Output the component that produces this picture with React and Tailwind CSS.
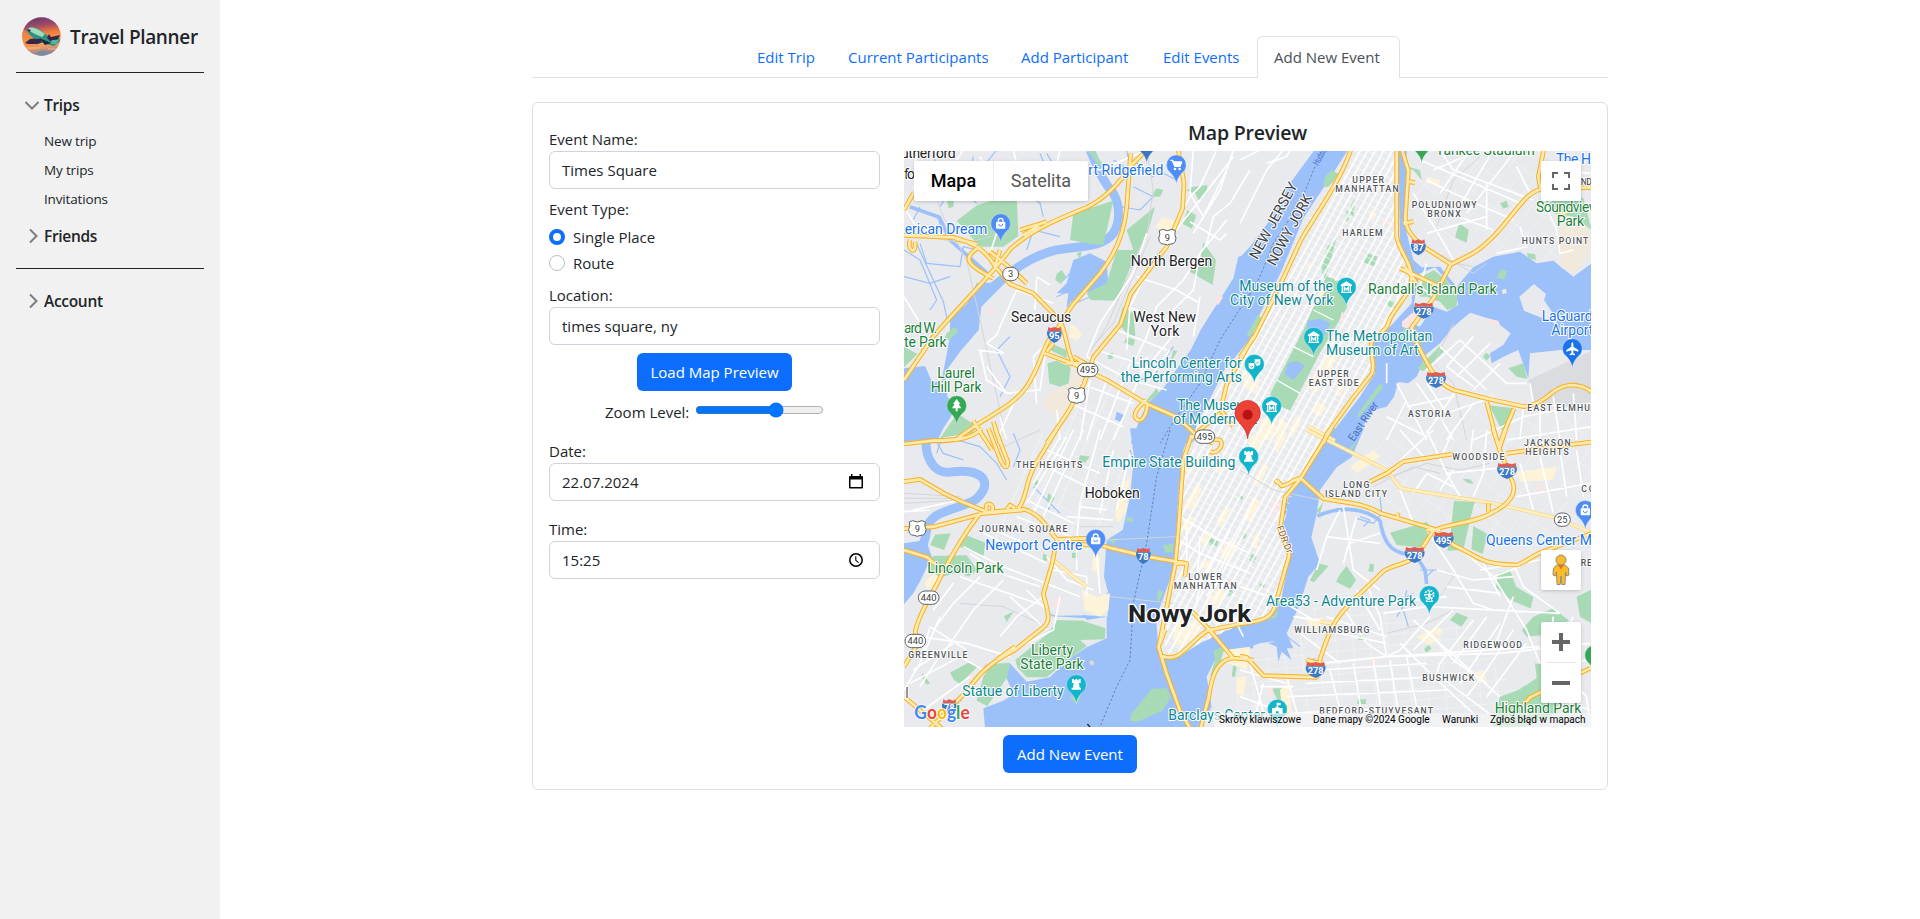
import React from "react";

const NE = [1020, 0];
const SW = [0, 840];
const SE = [1020, 840];

/* Draws one path per map sheet: north-west, north-east, south-west, south-east */
function Sheets({ d, ...rest }) {
  const offs = [[0, 0], NE, SW, SE];
  return (
    <g {...rest}>
      {d.map((p, i) => (
        <path key={i} d={p} transform={`translate(${offs[i][0]} ${offs[i][1]})`} />
      ))}
    </g>
  );
}

const water = [
  "M230 400L318 396L244 470L236 540L180 605L136 665L142 740L172 770L130 835L108 880H10V655L75 648L98 700L125 690L150 560V505L200 462Z M1060 310L1015 320L1000 385L965 440L930 495L902 540L872 600L832 655L792 712L742 762L722 802L692 880H880L890 820L932 742L972 662L1060 555Z M520 330L570 310L620 335L625 400L600 440L560 425L530 440L500 470L505 430L470 430L500 400Z M650 785L672 795L660 815L645 808Z",
  "M225 -2H325L270 84L190 205L125 362L60 492L0 600V322L30 290L90 210L150 100Z M475 -2H500L498 240L520 330L545 352L600 350L650 410L700 352L760 320L840 305L890 340L940 332L1000 380L1055 340V600H960L870 610L865 685L835 600L790 620L755 640L750 610L790 585L812 550L760 510L690 488L640 530L600 580L560 612L530 680L505 700L475 696L462 740L440 770L400 780L340 872H262L290 830L360 740L405 670L393 620L390 560L450 530L515 460L520 375L480 310Z",
  "M690 -5H875L850 60L834 200L826 400L790 505L768 562L775 650L790 684L830 685L900 640L1000 592L1060 585V655L960 660L920 740L935 830L900 895H255L250 835L310 812L342 792L318 742L330 700L380 755L450 742L500 692L560 652L620 625V560L560 570L545 545L560 565L450 558L560 556L622 560L628 500L612 440L620 330L668 300L690 200L702 80Z M10 340L78 330L95 380L62 450L40 490L10 525Z M10 -5H75L60 30L10 40Z M436 236L446 222L450 236L438 246Z",
  "M270 -5H372L335 82L290 112L240 180L230 252L214 322L240 400L205 440L180 520L163 560L140 610L160 655L140 655L155 690L125 665L115 695L110 650L85 640L110 632L60 640L0 660V588L90 562L125 500L150 372L125 290L135 205L180 148Z",
];
const creeks = [
  "M570 0C590 40 600 85 640 130C662 170 660 220 640 250C600 300 520 285 450 305C370 330 330 370 280 410",
  "M0 0",
  "M88 -10C60 70 100 140 160 125C265 115 275 170 225 210C160 245 90 240 80 300C70 360 50 400 15 450",
  "M0 0",
];
const canals = [
  "M30 170L118 202L150 270L262 370M118 202L130 240",
  "M0 0",
  "M0 0",
  "M232 258C300 228 370 232 420 272C430 332 450 366 500 372M530 380L555 420L560 462",
];
const brooks = [
  "M50 282L130 455L142 510M12 300L60 330L110 450L90 480M100 0L110 60L150 100L200 110M290 0L250 50L330 60M420 10L440 60L400 100M180 80L120 170M220 20L200 130L230 160M640 30L690 60L680 0M660 170L720 180L760 140L700 110M720 60L760 80L700 30M350 110L420 160L430 200M60 170L40 210M12 380L90 400L150 380M60 280L80 340L180 350L190 290L230 300M330 560L290 600L330 680L300 740M380 300L400 240L480 260M770 60L830 90L820 20M480 400L520 360L600 350M470 440L600 380M500 470L620 420M540 320L520 450M580 320L590 430M820 590L760 680L720 690M440 10L470 60",
  "M0 0",
  "M110 70L120 40L170 30L240 50L290 100L320 150M100 20L130 70L190 90M340 110L360 60L340 10M400 170L430 200L480 250M470 560L440 550M640 330L700 330M620 410L670 412M620 490L660 494M630 440L650 442M690 60L700 90M830 120L855 122M825 155L850 156M820 190L850 192M825 220L845 222M822 90L850 92",
  "M370 290L390 270L360 260M350 265L400 280L425 250L420 200M540 420L590 420M500 480L490 530L470 560M490 540L505 590M130 610L180 650M580 420L560 440M520 490L500 500",
];
const isles = [
  "M0 0",
  "M838 440L882 402L918 432L912 450L945 500L950 522L900 502L852 482Z M785 420L798 416L800 430L788 432Z",
  "M0 0",
  "M0 0",
];
const parks = [
  "M520 190L640 152L610 285L560 280L510 270Z M680 240L765 170L742 250L692 350L650 452L572 450L560 430L620 400L650 300L700 300Z M232 165L350 130L355 258L310 290L240 290L170 212Z M910 276L926 300L948 330L938 405L864 362L900 330Z M862 180L888 196L876 236L848 222Z M872 112L922 105L920 130L896 152L886 130L860 122Z M442 640L470 632L512 652L506 700L480 710L448 700Z M668 472L700 490L706 560L685 555L655 520Z M110 880L172 790L232 830L215 850L130 862Z M12 590L52 612L12 652Z M470 372L485 360L497 378L482 402L466 390Z M140 550L165 530L175 545L150 568L130 575Z M760 130L770 115L790 120L780 140L760 140Z M680 560L705 570L700 588L672 578Z M625 610L640 608L638 625L625 628Z M820 600L832 604L810 640Z M770 715L778 730L745 755L740 750Z M560 0H580L620 60L600 50Z M530 310L545 305L540 330Z M450 580L500 600L500 625L450 600Z M140 150L162 152L160 170L146 175Z",
  "M260 378L292 392L304 398L322 470L240 610L150 782L94 757L90 732L190 540Z M290 262L270 340L254 388L244 360L262 290Z M380 308L412 320L402 348L370 338Z M658 220L686 240L680 278L645 262Z M545 380L582 360L620 392L652 440L650 470L622 480L600 455L560 440L530 430Z M782 358L802 364L792 388L770 384Z M600 588L616 600L550 664L532 655Z M738 608L752 618L740 632L728 620Z M805 655L850 640L862 686L830 680Z M905 130L1030 145L1055 240L1000 200L940 190Z M748 766L820 775L785 840L765 800Z M420 700L430 710L350 810L355 790Z M255 80L275 60L300 75L265 110L250 112Z M440 450L470 455L462 475L445 470Z M780 160L800 152L806 170L790 176Z M320 180L340 200L345 150L360 130L335 160L325 210L315 215Z M840 0H862L855 20Z M505 50L540 60L545 90L520 60L500 55Z M550 395L590 395L570 440L540 440Z M500 520L510 550L535 562L545 580L470 575Z M860 310L885 312L888 330L865 325Z M55 490L65 510L30 560L20 555Z M1025 770L1060 770L1060 785Z",
  "M472 570L548 572L617 595L614 628L540 630L560 648L502 692L440 742L380 742L352 712L346 690L442 612Z M190 312L256 338L250 382L180 350Z M98 378L200 376L232 420L205 440L175 425L100 450L88 418Z M275 702L330 698L322 742L262 828L230 812L250 740Z M150 728L205 698L232 710L180 762L162 750Z M105 314L152 310L132 360L90 345Z M755 776L800 774L812 802L788 842L712 875L690 874L692 855Z M540 76L570 80L555 98L535 92Z M430 370L446 380L438 395L428 388Z M340 545L320 576L312 558Z M68 730L90 760L80 764L65 738Z M412 150L418 160L408 170L402 158Z M516 368H534V384H516Z M445 190L464 204L452 222L440 212Z M930 322L956 336L950 352L925 342Z M790 345L820 342L818 366L795 368Z M990 470L1000 488L985 500Z M776 480L790 485L775 520L770 500Z M680 262L700 264L698 276L680 274Z M1000 700L1012 700L1005 740L995 740Z M940 660L975 650L960 700L930 740L945 690Z M1015 195L1030 200L1025 215Z M630 330L650 325L640 345Z M508 800L540 798L538 815L525 818Z",
  "M450 308L560 276L580 300L540 352L470 345Z M642 212L704 216L690 270L670 360L622 362L632 308Z M700 288L742 312L728 372L694 358Z M236 400L266 408L222 456L210 452Z M300 432L320 408L348 450L330 476L288 455Z M775 430L810 420L828 470L880 502L872 535L815 512L768 472Z M845 600L880 560L940 535L985 570L960 610L860 620Z M758 890L780 800L835 780L890 745L885 700L940 710L955 810L950 850L860 890Z M1010 500L1055 478V580L1020 560Z M650 548L684 562L664 590L630 570Z M390 400L402 404L400 426L385 424Z M668 146L690 148L702 162L682 158Z M360 615H370V630H355Z M352 808H378V822H352Z M240 230L250 215L240 250L228 245Z M355 28L330 70L322 62Z M60 460L75 465L70 475L56 470Z M95 775L132 775L130 815L115 815Z M565 645L575 655L560 668L552 658Z M195 690L225 685L232 700L205 705Z M35 372L50 380L42 398L28 390Z M8 310L20 304L18 322L6 330Z M100 560L115 530L110 560L80 575Z",
];
const buff = [
  "M788 202L830 214L806 250L765 230Z M510 520L532 535L546 552L530 572L510 562Z M690 370L700 385L690 392Z",
  "M210 480L230 460L260 420L250 400Z M270 600L300 610L230 730L205 715Z M60 820L80 795L110 830L90 870H50Z M165 800L185 812L160 860L145 850Z M120 800L140 820L120 860L105 850Z M230 750L260 770L240 800L215 785Z M300 690L320 700L300 740L285 730Z M390 180L410 190L400 210L385 205Z M10 660L60 690L50 730L10 710Z M560 80L600 90L595 110L560 100Z M195 345L215 340L210 362Z",
  "M655 175L690 140L680 240L655 280L645 260Z M545 480L590 500L630 490L625 540L600 560L555 540Z M580 370L600 380L598 430L575 420Z M950 95L980 105L960 130L945 125Z M850 120L880 80L910 95L870 130Z M865 205L890 160L905 175L880 240L850 230Z M850 270L880 260L872 300L850 298Z M950 270L975 230L990 240L965 290Z M900 330L925 300L935 320L912 350Z M900 400L930 390L940 420L900 412Z M960 370L985 330L1010 345L985 400Z M820 590L850 560L872 575L900 560L895 600L850 650L820 640Z M925 510L960 470L980 490L945 540Z M72 460L100 430L120 440L85 480Z M975 660L1050 650L1040 720L980 700Z M1010 740L1040 740L1030 800L1008 790Z",
  "M30 20L60 0L90 10L50 60L25 50Z M100 30L130 0L140 20L110 70Z M830 125L950 110L940 150L840 155Z M530 620L570 600L600 630L565 645Z M580 590L610 600L600 618L575 606Z M200 570L250 560L240 590L215 600Z M120 780L145 760L160 880L130 870Z M700 730L730 720L740 750L715 760Z M40 150L70 100L85 110L55 170Z M10 260L40 200L60 215L30 280Z M330 110L400 60L420 80L350 130Z M985 640L1000 630L1005 650Z M40 320L60 300L50 360L35 350Z",
];
const tan = [
  "M522 610L545 630L565 690L500 800L430 780L432 740L510 700Z",
  "M960 190L1035 208L1050 262L1050 312L1000 368L962 352L955 280Z",
  "M0 0",
  "M0 0",
];
const rose = [
  "M262 480L285 470L280 490L262 492Z M950 440L970 440L955 465L945 460Z",
  "M305 485L318 495L310 520L300 512Z M486 515L515 490L545 485L525 525L500 535L486 530Z M425 208L450 210L448 225L420 220Z M290 780L320 785L310 795H288Z M740 505L775 512L780 525L742 520Z",
  "M462 505L486 502L480 530L460 535Z",
  "M885 170L912 168L910 180L885 180Z M392 690L410 680L408 702L395 706Z M85 775L100 772L98 800L85 805Z M100 215L120 200L115 240L95 260Z",
];
const streets = [
  "M50 0L40 120M12 440L60 520M190 0L170 30M240 20L260 60M340 0L350 40M0 150L60 250M290 250L270 310M410 385L405 480M410 380L450 405M480 0L470 40L600 60L740 0M235 600L310 610L260 580L290 555L300 530L350 420L460 460M240 600L260 690L320 730L420 720L440 580L400 620L410 760M300 800L320 870M880 0L870 130L910 200L980 60M950 0L900 110L870 140L770 330M1000 20L900 150L820 250L740 370L690 470L680 600M1050 60L990 160L940 200L920 280L850 390L770 470L740 560L700 640M1000 0L960 120L880 250M980 210L900 310L880 420L800 500M740 250L700 370L600 520L560 620M870 215L960 270L980 250M710 380L830 420L900 460M680 470L830 520M650 540L800 600M590 600L780 660M560 620L690 690L800 720M540 700L700 760M510 760L670 830M570 690L540 870M620 690L560 870M690 640L600 870M740 620L680 780L640 870M470 780L480 870M850 520L700 700M810 600L740 700M900 440L880 560M350 740L290 870M320 730L260 650",
  "M0 30L60 0M130 0L80 60L20 180L0 220M80 40L140 20L150 0M20 180L70 80M540 30L750 120L840 160M580 60L720 0M600 0L640 60L880 150M690 0L600 130M760 0L640 200M820 10L680 190M560 90L640 130L820 210M580 170L760 240M520 130L600 260L640 330M560 250L740 200M740 100L740 240M830 50L870 130M900 130L950 240L960 310L1000 300M960 130L900 180M1053 70L940 60M840 230L860 290L770 310M530 700L600 800L640 870M660 570L800 700L860 700M660 570L560 660M700 560L620 650L700 710M750 580L650 680M780 640L700 720M600 590L740 720M870 700L880 760M560 700L620 790L760 740M500 770L640 740M440 800L560 860M470 700L560 870M650 720L560 850M700 760L620 870M700 870L850 800L1053 760M850 770L840 870M900 760L900 870M940 740L960 870M1000 730L1010 870M800 870L1053 830M500 750L440 870M560 340L540 410L580 440M440 640L440 700",
  "M520 0L400 250M550 0L430 260M500 20L380 220M440 60L600 130M420 100L580 180M600 0L540 220L530 330M640 60L600 250M690 70L650 240M480 20L400 160M380 210L520 280M350 260L540 330M500 260L640 270M540 230L620 240M590 370L600 490M530 340L530 420M190 350L310 410L540 500M250 310L440 400M260 290L420 360M210 370L300 430L420 470M440 380L500 450L580 480M180 440L440 530M330 500L440 600M430 500L350 560L300 620M380 480L440 540M480 500L460 600L300 680M240 440L160 520L100 600M310 450L220 540L130 670M60 620L200 640L330 680M90 590L200 660M120 560L60 700M40 720L160 640M30 760L180 680L250 720M70 840L210 740M12 780L60 700L90 590M160 460L100 540M130 660L60 770M460 420L560 440L560 500M40 240L180 210M12 245L90 240M1030 620L1000 560M840 260L960 330L1050 370M835 330L900 370L1050 430M900 320L890 480M860 290L860 470M990 300L900 470L880 560M1050 240L960 420L920 500",
  "M480 180L520 280M560 0L620 130L660 200M480 0L560 90M640 0L600 90M700 0L690 80M740 0L730 130L700 200M620 130L820 110M600 180L640 120M840 100L880 240M900 80L940 250M960 60L980 200M1010 60L1030 200M830 200L1050 160M580 0L480 90M520 190L560 130L640 170M300 240L260 320L420 340M260 320L230 420M310 230L340 420L420 480M420 310L330 340M350 260L310 400M380 460L420 560L440 680M350 480L420 600M300 520L380 640L440 680M560 300L640 420L700 520L760 540M640 340L760 440L860 600L900 700M720 380L780 500M720 420L900 390M820 400L850 470L960 550M760 440L840 410M590 420L700 450L820 440M620 470L780 490M440 520L620 500M430 550L560 530L960 550M570 560L480 660L440 680M640 540L520 660M700 570L600 700L580 760M740 560L640 700M780 580L660 760M820 600L740 720L680 800M860 640L740 800M520 570L600 640L780 800M560 600L640 690L740 760M480 640L580 740L700 850M440 680L900 650M240 700L440 680L780 670L1050 640M240 720L560 700M200 760L600 740L760 860M140 800L620 780M60 770L160 770M150 850L560 830M140 740L180 880M270 720L310 880M340 700L370 880M400 690L430 880M450 690L480 880M500 680L540 880M30 700L80 880M0 720L140 760M0 800L140 850M0 850L90 880M70 760L40 880M250 600L440 640M260 560L440 620M180 610L300 700M160 560L300 580M820 500L760 660M940 560L920 690M1000 560L940 700L1053 690M960 720L1040 800L1050 890M960 810L1050 840M0 470L120 510L220 570",
];
const highways = [
  "M12 690L100 560C180 465 280 370 330 298C400 235 480 205 560 172C620 142 665 90 690 50L740 0 M692 10L680 172C672 260 640 320 600 370L520 462C490 500 490 520 450 565C430 590 420 650 380 710C330 780 250 800 165 872 M12 256L160 262C230 280 262 310 285 348L330 402L400 430L480 512C498 545 500 600 520 642 M165 266L230 282M285 348L300 300M240 290C190 320 190 340 280 385M270 305C300 330 330 350 380 400 M360 240L440 215M370 255L420 225 M430 608L520 642L620 690L742 762L832 802L885 852L940 880 M440 605L460 580M520 620L555 640L500 640 M835 0L852 100L848 175L800 290L760 342L692 432L662 522L580 622L552 702L502 790L440 880 M742 762C740 800 720 825 705 802C700 780 730 760 738 750 M12 180L40 130M30 270C20 300 50 320 45 275 M220 812C240 850 260 870 275 900M280 815L300 880 M1060 560L980 702L962 780L1000 830M960 790L900 840L875 865",
  "M335 -10C310 82 222 200 182 272C150 342 122 402 102 442L42 562L0 622 M486 0L505 62L496 202C496 242 522 262 542 285L632 342 M470 -5L470 262C482 312 512 332 515 382C512 432 482 450 452 502L440 532L395 575C385 622 410 632 395 672L340 742L262 850L250 880 M632 344L702 308C802 242 842 130 902 118L895 80L912 -5M902 118L1055 112 M632 344L602 402L582 442L515 532L532 582C562 642 590 702 640 720L742 746L852 770C922 762 932 710 992 705C1022 705 1042 715 1055 726 M740 756L770 870L775 880M822 776L795 840L780 880 M480 355L600 410M495 350L530 400M505 95L525 98M490 220L520 215",
  "M12 42L100 32C180 32 222 22 245 -5 M12 155L60 148L132 190L182 214L262 246L372 238C422 252 440 292 470 328L560 325L600 345L640 356L742 380L860 400 M480 330L560 345L600 348 M12 296L102 290L252 250L370 240 M475 -10L402 110C372 172 382 202 355 235 M242 248C182 322 142 402 122 440C92 502 62 540 46 602L48 650L12 710 M12 360L82 382L104 402 M470 330L456 402L430 492C442 542 456 572 430 592L342 662C282 692 242 722 202 782L90 895 M345 650L290 690 M265 -5L302 92C320 130 330 100 318 82L285 -5 M875 15L850 90L835 302L826 402L790 582L776 652L800 732L840 842L870 895 M780 640L795 600M785 678C842 700 862 640 922 602L1050 575 M872 540L922 592L1000 685 M1060 690L1000 684C942 690 932 762 926 802L902 895 M12 800L62 842L125 895 M260 240C250 210 290 220 275 245M320 240L330 225L345 235 M880 20L960 30C975 45 950 75 930 65 M826 400L860 400L855 440",
  "M275 -5L182 145L135 202L120 302C132 350 152 352 146 382L112 502C102 562 82 572 0 582 M182 145L250 206C332 220 372 220 422 250L580 296L642 346C722 382 722 405 832 405C882 382 882 372 922 360L1055 310 M112 152L125 168C150 165 160 145 182 145M115 160L105 150 M758 -5L780 62L820 162C830 202 790 232 760 246C702 282 622 280 580 302L542 360C522 402 462 402 432 422L330 520C282 572 272 592 242 682L230 742L70 737L20 682L0 678 M798 -5L776 62 M800 70L940 50L1055 36 M440 130L490 95L640 72M390 155L450 125 M470 250L475 260M745 220L745 245 M200 690L240 700M850 825L870 802L1050 715M560 300L600 300",
];
const arterials = [
  "M0 0",
  "M205 828L285 872M950 200L990 180",
  "M460 390L520 440L560 470",
  "M200 0L440 120L482 175L760 220L942 262L1055 308M240 575L275 580",
];
const ferries = [
  "M1050 430L960 570L900 700L830 800L780 880",
  "M225 50L180 160L100 280L60 380L20 450",
  "M810 0L770 140L740 340L700 520L690 690L650 770L600 890",
  "M0 0",
];
const rails = [
  "M12 250L200 280L300 250M740 250L620 530L560 620M750 260L640 520L570 600M100 120L130 200L200 330L260 600L300 780L320 870M740 0L760 120L740 250",
  "M720 20L640 90L590 230M560 290L700 370L740 340M650 340L700 350M640 520L580 640L640 700L680 870",
  "M12 190L180 200M12 205L190 205M12 220L180 210M620 330L830 320M630 500L820 520M290 60L420 0M180 520L310 530L440 590M260 700L150 860M640 290L540 290",
  "M380 160L480 130L560 100L660 120L750 100M400 170L520 110L600 130M0 120L100 180L240 210M600 500L640 440L620 420M440 610L560 580L640 540",
];

function Label({ x, y, w, t, c = "#202124", s = 42, wt = 400, q = [0, 0], h = 6, rot, squeeze }) {
  const gx = x + q[0];
  const gy = y + q[1];
  return (
    <text
      x={gx}
      y={gy}
      fill={c}
      fontSize={s}
      fontWeight={wt}
      stroke="#ffffff"
      strokeWidth={h}
      strokeLinejoin="round"
      paintOrder="stroke"
      textLength={w}
      lengthAdjust={squeeze ? "spacingAndGlyphs" : "spacing"}
      transform={rot ? `rotate(${rot} ${gx} ${gy})` : undefined}
    >
      {t}
    </text>
  );
}

const G = "#188038";
const B = "#1a73e8";
const T = "#0b8793";
const labels = [
  { x: -22, y: 25, w: 189, t: "Rutherford" },
  { x: 12, y: 88, w: 33, t: "fo" },
  { x: 565, y: 75, w: 225, t: "rt Ridgefield", c: B },
  { x: 14, y: 252, w: 248, t: "erican Dream", c: B },
  { x: 12, y: 550, w: 100, t: "ard W.", c: G },
  { x: 12, y: 592, w: 128, t: "te Park", c: G },
  { x: 112, y: 684, w: 113, t: "Laurel", c: G },
  { x: 92, y: 726, w: 153, t: "Hill Park", c: G },
  { x: 333, y: 516, w: 181, t: "Secaucus" },
  { x: 692, y: 348, w: 245, t: "North Bergen" },
  { x: 700, y: 516, w: 188, t: "West New" },
  { x: 752, y: 558, w: 86, t: "York" },
  { x: 695, y: 655, w: 330, t: "Lincoln Center for", c: T },
  { x: 662, y: 697, w: 364, t: "the Performing Arts", c: T },
  { x: 832, y: 781, w: 236, t: "The Museum", c: T },
  { x: 820, y: 823, w: 252, t: "of Modern Art", c: T },
  { x: 1018, y: 424, w: 281, t: "Museum of the", c: T },
  { x: 990, y: 466, w: 310, t: "City of New York", c: T },
  { q: NE, x: 258, y: 574, w: 319, t: "The Metropolitan", c: T },
  { q: NE, x: 258, y: 616, w: 278, t: "Museum of Art", c: T },
  { q: NE, x: 384, y: 433, w: 386, t: "Randall's Island Park", c: G },
  { q: NE, x: 888, y: 186, w: 190, t: "Soundview", c: G },
  { q: NE, x: 950, y: 228, w: 82, t: "Park", c: G },
  { q: NE, x: 905, y: 514, w: 184, t: "LaGuardia", c: B },
  { q: NE, x: 934, y: 556, w: 126, t: "Airport", c: B },
  { q: NE, x: 587, y: 14, w: 297, t: "Yankee Stadium", c: G },
  { q: NE, x: 948, y: 42, w: 105, t: "The H", c: B },
  { q: SW, x: 554, y: 204, w: 165, t: "Hoboken" },
  { q: SW, x: 256, y: 361, w: 291, t: "Newport Centre", c: B },
  { q: SW, x: 82, y: 429, w: 229, t: "Lincoln Park", c: G },
  { q: SW, x: 393, y: 675, w: 126, t: "Liberty", c: G },
  { q: SW, x: 361, y: 717, w: 190, t: "State Park", c: G },
  { q: SW, x: 187, y: 797, w: 304, t: "Statue of Liberty", c: T },
  { q: SW, x: 16, y: 803, w: 9, t: "l", c: "#5f6368" },
  { q: SW, x: 607, y: 112, w: 399, t: "Empire State Building", c: T },
  { q: SW, x: 805, y: 871, w: 290, t: "Barclays Center", c: T },
  { q: SE, x: 738, y: 346, w: 318, t: "Queens Center M", c: B },
  { q: SE, x: 78, y: 529, w: 450, t: "Area53 - Adventure Park", c: T },
  { q: SE, x: 764, y: 850, w: 260, t: "Highland Park", c: G },
];
const districts = [
  { q: NE, x: 337, y: 100, w: 95, t: "UPPER" },
  { q: NE, x: 286, y: 127, w: 190, t: "MANHATTAN" },
  { q: NE, x: 515, y: 174, w: 195, t: "POŁUDNIOWY" },
  { q: NE, x: 562, y: 201, w: 100, t: "BRONX" },
  { q: NE, x: 307, y: 258, w: 121, t: "HARLEM" },
  { q: NE, x: 845, y: 282, w: 200, t: "HUNTS POINT" },
  { q: NE, x: 1022, y: 104, w: 34, t: "ND" },
  { q: NE, x: 232, y: 682, w: 94, t: "UPPER" },
  { q: NE, x: 206, y: 708, w: 150, t: "EAST SIDE" },
  { q: NE, x: 504, y: 802, w: 128, t: "ASTORIA" },
  { q: NE, x: 862, y: 783, w: 188, t: "EAST ELMHU" },
  { q: SW, x: 348, y: 114, w: 199, t: "THE HEIGHTS" },
  { q: SW, x: 237, y: 306, w: 265, t: "JOURNAL SQUARE" },
  { q: SW, x: 25, y: 684, w: 177, t: "GREENVILLE" },
  { q: SW, x: 865, y: 450, w: 100, t: "LOWER" },
  { q: SW, x: 821, y: 477, w: 189, t: "MANHATTAN" },
  { q: SE, x: 852, y: 48, w: 140, t: "JACKSON" },
  { q: SE, x: 856, y: 75, w: 130, t: "HEIGHTS" },
  { q: SE, x: 637, y: 90, w: 156, t: "WOODSIDE" },
  { q: SE, x: 310, y: 174, w: 78, t: "LONG" },
  { q: SE, x: 255, y: 201, w: 186, t: "ISLAND CITY" },
  { q: SE, x: 1024, y: 187, w: 40, t: "CO" },
  { q: SE, x: 1022, y: 408, w: 34, t: "RE" },
  { q: SE, x: 163, y: 609, w: 225, t: "WILLIAMSBURG" },
  { q: SE, x: 670, y: 654, w: 176, t: "RIDGEWOOD" },
  { q: SE, x: 547, y: 753, w: 156, t: "BUSHWICK" },
  { q: SE, x: 238, y: 851, w: 341, t: "BEDFORD-STUYVESANT" },
];

const glyphs = {
  bag: (
    <g>
      <rect x="-14" y="-6" width="28" height="21" rx="3" fill="#fff" />
      <path d="M-7 -6V-9A7 7 0 0 1 7 -9V-6" fill="none" stroke="#fff" strokeWidth="4" />
      <path d="M-6 1A6 6 0 0 0 6 1" fill="none" stroke="#4e8df5" strokeWidth="3" />
    </g>
  ),
  cart: (
    <g fill="none" stroke="#fff" strokeWidth="4">
      <path d="M-18 -14H-11L-4 4H11L16 -9" />
      <path d="M-10 -9H15L10 2H-4Z" fill="#fff" />
      <circle cx="-4" cy="12" r="2" />
      <circle cx="10" cy="12" r="2" />
    </g>
  ),
  tree: <path d="M0 -20L11 -5H6L14 8H3V17H-3V8H-14L-6 -5H-11Z" fill="#fff" />,
  museum: (
    <g>
      <path d="M0 -18L17 -8V-4H-17V-8Z M-16 13H16V17H-16Z M-14 -4H-10V13H-14Z M10 -4H14V13H10Z" fill="#fff" />
      <path d="M-6 11V0L0 7L6 0V11" fill="none" stroke="#fff" strokeWidth="4" />
    </g>
  ),
  drama: (
    <g fill="#fff">
      <path d="M-17 -4H0V6A8.500 8.500 0 0 1 -17 6Z" />
      <path d="M1 -15H18V-5A8 8 0 0 1 3 0V-5H1Z" />
      <path d="M-12 6Q-8 11 -4 6M6 -4Q10 -8 13 -4" fill="none" stroke="#12b5cb" strokeWidth="3" />
    </g>
  ),
  plane: (
    <path d="M0 -19C3 -19 3 -14 3 -6L18 4V9L3 5V13L8 17V20L0 18L-8 20V17L-3 13V5L-18 9V4L-3 -6C-3 -14 -3 -19 0 -19Z" fill="#fff" />
  ),
  castle: <path d="M-13 -17H-7V-13H-3V-17H3V-13H7V-17H13V-5H8L10 9H14V15H-14V9H-10L-8 -5H-13Z" fill="#fff" />,
  wheel: (
    <g fill="none" stroke="#fff" strokeWidth="3">
      <circle cy="-3" r="13" strokeDasharray="6 3" strokeWidth="5" />
      <circle cy="-3" r="3" fill="#fff" />
      <path d="M0 -3L-9 17M0 -3L9 17M-11 17H11M0 -14V8M-10 -3H10" />
    </g>
  ),
  school: <path d="M-2 -20H10V-12H2V-8L8 -4H16V14H4V6H-4V14H-16V-4H-8L-2 -8Z" fill="#fff" />,
  none: null,
};
const pins = [
  [829, 45, "#4e8df5", "cart"],
  [302, 221, "#4e8df5", "bag"],
  [170, 767, "#34a853", "tree"],
  [740, -18, "#3b73c5", "none"],
  [1339, 412, "#12b5cb", "museum"],
  [1241, 562, "#12b5cb", "museum"],
  [1115, 769, "#12b5cb", "museum"],
  [1063, 643, "#12b5cb", "drama"],
  [2017, 596, "#1a73e8", "plane"],
  [1565, -18, "#34a853", "none"],
  [587, 1168, "#4e8df5", "bag"],
  [529, 1604, "#12b5cb", "castle"],
  [1046, 920, "#12b5cb", "castle"],
  [1588, 1337, "#12b5cb", "wheel"],
  [1132, 1678, "#12b5cb", "school"],
  [2056, 1081, "#4e8df5", "bag"],
  [2084, 1516, "#34a853", "none"],
];
const interstates = [
  [463, 555, "95", 44],
  [1555, 292, "87", 44],
  [1571, 482, "278", 60],
  [1608, 690, "278", 60],
  [730, 1218, "78", 44],
  [148, 1672, "78", 44],
  [1821, 963, "278", 60],
  [1631, 1170, "495", 60],
  [1544, 1215, "278", 60],
  [1247, 1560, "278", 60],
];
const ovals = [
  [332, 372, "3", 48],
  [563, 660, "495", 62],
  [914, 860, "495", 60],
  [86, 1343, "440", 62],
  [46, 1473, "440", 62],
  [1987, 1109, "25", 48],
];
const usRoutes = [
  [802, 262],
  [530, 737],
  [52, 1136],
];

function CityMap() {
  return (
    <svg viewBox="12 3 2061 1728" className="block h-full w-full" fontFamily="Roboto, sans-serif" preserveAspectRatio="none">
      <defs>
        <pattern id="manhattan" width="84" height="20" patternUnits="userSpaceOnUse" patternTransform="rotate(29)">
          <path d="M0 0H84" stroke="#fbfbfc" strokeWidth="4" />
          <path d="M10 0V20M33 0V20M52 0V20M72 0V20" stroke="#fff" strokeWidth="5" />
        </pattern>
        <pattern id="jersey" width="66" height="52" patternUnits="userSpaceOnUse" patternTransform="rotate(24)">
          <path d="M0 0H66M10 0V52" stroke="#f3f4f6" strokeWidth="2.500" />
        </pattern>
        <pattern id="queens" width="42" height="74" patternUnits="userSpaceOnUse" patternTransform="rotate(38)">
          <path d="M0 0H42M0 0V74" stroke="#f5f6f8" strokeWidth="2.500" />
        </pattern>
        <pattern id="brooklyn" width="52" height="34" patternUnits="userSpaceOnUse" patternTransform="rotate(-6)">
          <path d="M0 0H52M0 0V34" stroke="#f7f8fa" strokeWidth="2.500" />
        </pattern>
      </defs>
      <rect width="2100" height="1760" fill="#e8eaed" />
      <path d="M620 640L840 600L690 880L640 1250L420 1150L240 1220L400 880Z" fill="url(#jersey)" />
      <path d="M1530 0H2073V340H1660L1540 250Z M1440 840L1560 690L2073 780V1250L1640 1140L1260 1120Z" fill="url(#queens)" />
      <path d="M1230 1380L1340 1300L1500 1400L1700 1420L1860 1640L1800 1740H1000L1020 1540L1180 1500Z" fill="url(#brooklyn)" />
      <path d="M1885 690L2080 600V775L1900 760Z" fill="#dadce0" />
      <Sheets d={water} fill="#9cc0f9" />
      <Sheets d={creeks} fill="none" stroke="#9cc0f9" strokeWidth="27" />
      <Sheets d={canals} fill="none" stroke="#9cc0f9" strokeWidth="11" strokeLinejoin="round" />
      <Sheets d={brooks} fill="none" stroke="#9cc0f9" strokeWidth="3.500" strokeLinejoin="round" />
      <Sheets d={isles} fill="#e8eaed" />
      <path d="M1560 370L1605 352L1665 420L1675 465L1640 485L1600 470L1560 530L1535 520L1545 440Z" fill="#e8eaed" />
      <Sheets d={tan} fill="#f0e9dc" />
      <Sheets d={parks} fill="#a8dab5" />
      <Sheets d={buff} fill="#fdf3d8" />
      <Sheets d={rose} fill="#fce4e4" />
      <path
        d="M1355 0H1490L1492 260L1530 380L1460 520L1410 590L1412 660L1270 870L1190 990L1148 1130L1160 1230L1118 1400L1020 1425L900 1480L810 1520L780 1450L795 1350L835 1200L845 1000L880 850L932 752L1010 630L1070 560L1150 370L1220 210L1310 80Z M1280 378L1210 540L1112 730L1114 757L1170 782L1260 610L1342 470L1320 400Z"
        fillRule="evenodd"
        fill="url(#manhattan)"
      />
      <path d="M1222 512L1262 506L1290 520L1280 550L1258 568L1222 545Z M1165 640L1190 632L1215 648L1180 690L1152 672Z" fill="#9cc0f9" />
      <path d="M1240 480L1300 510M1180 590L1240 620M1130 690L1200 730" stroke="#fff" strokeWidth="4" />
      <Sheets d={rails} fill="none" stroke="#d3d6da" strokeWidth="3" />
      <Sheets d={streets} fill="none" stroke="#fff" strokeWidth="5" strokeLinejoin="round" />
      <path d="M567 1534L578 1530L584 1542L572 1548Z" stroke="#b9c4bd" strokeWidth="3" strokeDasharray="4 3" fill="#dadce0" />
      <Sheets d={ferries} fill="none" stroke="#5f7396" strokeWidth="2.500" strokeDasharray="7 6" />
      <Sheets d={arterials} fill="none" stroke="#fbcf60" strokeWidth="11" strokeLinejoin="round" />
      <Sheets d={arterials} fill="none" stroke="#feefc3" strokeWidth="8" strokeLinejoin="round" />
      <Sheets d={highways} fill="none" stroke="#fbb01b" strokeWidth="14" strokeLinejoin="round" />
      <Sheets d={highways} fill="none" stroke="#feeaae" strokeWidth="8" strokeLinejoin="round" />

      {ovals.map(([x, y, t, w]) => (
        <g key={`${x}-${y}`}>
          <rect x={x - w / 2} y={y - 20} width={w} height="40" rx="20" fill="#fff" stroke="#5f6368" strokeWidth="3" />
          <text x={x} y={y + 10} fontSize="28" textAnchor="middle" fill="#3c4043">{t}</text>
        </g>
      ))}
      {usRoutes.map(([x, y]) => (
        <g key={`${x}-${y}`} transform={`translate(${x} ${y})`}>
          <path d="M-24 -20L-14 -24L0 -20L14 -24L24 -20Q20 -8 26 2Q26 14 18 19Q6 20 0 23Q-6 20 -18 19Q-26 14 -26 2Q-20 -8 -24 -20Z" fill="#fff" stroke="#5f6368" strokeWidth="3" />
          <text y="10" fontSize="28" textAnchor="middle" fill="#3c4043">9</text>
        </g>
      ))}
      {interstates.map(([x, y, t, w]) => (
        <g key={`${x}-${y}`} transform={`translate(${x} ${y})`}>
          <path d={`M${-w / 2 + 4} -24L${-w / 4} -20L0 -24L${w / 4} -20L${w / 2 - 4} -24L${w / 2 - 2} -12H${-w / 2 + 2}Z`} fill="#de5b52" />
          <path d={`M${-w / 2} -11H${w / 2}Q${w / 2 + 2} 14 0 24Q${-w / 2 - 2} 14 ${-w / 2} -11Z`} fill="#3b78c8" />
          <text y="12" fontSize="28" fontWeight="700" textAnchor="middle" fill="#fff">{t}</text>
        </g>
      ))}

      {labels.map((l, i) => (
        <Label key={i} {...l} />
      ))}
      {districts.map((l, i) => (
        <Label key={i} s={26} wt={500} c="#51555a" h={5} {...l} />
      ))}
      <Label x={684} y={1415} w={369} t="Nowy Jork" s={74} wt={700} h={8} squeeze />
      <Label x={1072} y={331} w={255} t="NEW JERSEY" s={43} c="#3c4043" rot={-61.5} squeeze />
      <Label x={1125} y={350} w={236} t="NOWY JORK" s={43} c="#3c4043" rot={-61.5} squeeze />
      <Label x={1254} y={48} w={64} t="Hudson" s={28} c="#3f6fc4" h={0} rot={-61} squeeze />
      <Label x={1361} y={876} w={134} t="East River" s={33} c="#3f6fc4" h={0} rot={-56} squeeze />
      <Label x={1129} y={1132} w={86} t="FDR Dr" s={29} c="#8a5a1c" h={5} rot={68} squeeze />

      {pins.map(([x, y, c, g]) => (
        <g key={`${x}-${y}`} transform={`translate(${x} ${y})`}>
          <path d="M0 57C-2 42 -8 34 -18 23A29.500 29.500 0 1 1 18 23C8 34 2 42 0 57Z" fill={c} stroke="#fff" strokeOpacity="0.5" strokeWidth="2" />
          {glyphs[g]}
        </g>
      ))}
      <g transform="translate(1043 795)">
        <path d="M0 71C-3 48 -14 36 -26 22A38 38 0 1 1 26 22C14 36 3 48 0 71Z" fill="#ea4335" stroke="#c5221f" strokeWidth="2" />
        <circle cy="-1" r="15" fill="#b31412" />
      </g>
      <path d="M562 1722L570 1731" stroke="#222" strokeWidth="4" />
      <text x="43" y="1706" fontSize="58" fontWeight="700" textLength="166" lengthAdjust="spacingAndGlyphs" stroke="#fff" strokeWidth="5" paintOrder="stroke" fontFamily="Lato, sans-serif">
        <tspan fill="#4285f4">G</tspan>
        <tspan fill="#ea4335">o</tspan>
        <tspan fill="#fbbc04">o</tspan>
        <tspan fill="#4285f4">g</tspan>
        <tspan fill="#34a853">l</tspan>
        <tspan fill="#ea4335">e</tspan>
      </text>
    </svg>
  );
}

function MapPanel() {
  return (
    <div className="relative h-[576px] w-[687px] overflow-hidden font-['Roboto',sans-serif] tracking-normal">
      <CityMap />
      <div className="absolute left-[10px] top-[10px] flex h-10 rounded-[2px] bg-white text-[18px] leading-10 shadow-[0_1px_4px_-1px_rgba(0,0,0,0.3)]">
        <div className="w-[80px] border-r border-[#ececec] text-center font-medium text-black">Mapa</div>
        <div className="w-[94px] text-center text-[#565656]">Satelita</div>
      </div>
      <div className="absolute right-[10px] top-[10px] flex size-10 items-center justify-center rounded-[2px] bg-white shadow-[0_1px_4px_-1px_rgba(0,0,0,0.3)]">
        <svg width="18" height="18" viewBox="0 0 18 18">
          <path d="M0 0v6h2V2h4V0H0zM16 0h-4v2h4v4h2V0h-2zM16 16h-4v2h6v-6h-2v4zM2 12H0v6h6v-2H2v-4z" fill="#666" />
        </svg>
      </div>
      <div className="absolute right-[10px] top-[399px] flex size-10 items-center justify-center rounded-[2px] bg-white shadow-[0_1px_4px_-1px_rgba(0,0,0,0.3)]">
        <svg width="18" height="32" viewBox="0 0 18 32">
          <path d="M5 11Q9 9 13 11L16.500 14L17 21L14.500 22L13.500 18L13 30.500H9.800L9 22L8.200 30.500H5L4.500 18L3.500 22L1 21L1.500 14Z" fill="#fbbc2c" stroke="#8a8378" strokeWidth="0.900" />
          <path d="M6 11L9 15.500L12 11Z" fill="#e8711a" />
          <circle cx="9" cy="6" r="5" fill="#fbbc2c" stroke="#8a8378" strokeWidth="0.900" />
        </svg>
      </div>
      <div className="absolute right-[10px] top-[471px] flex h-[81px] w-10 flex-col items-center rounded-[2px] bg-white shadow-[0_1px_4px_-1px_rgba(0,0,0,0.3)]">
        <div className="flex h-10 items-center">
          <svg width="18" height="18" viewBox="0 0 18 18">
            <path d="M18 7h-7V0H7v7H0v4h7v7h4v-7h7z" fill="#666" />
          </svg>
        </div>
        <div className="h-px w-[30px] bg-[#e6e6e6]" />
        <div className="flex h-10 items-center">
          <svg width="18" height="18" viewBox="0 0 18 18">
            <path d="M0 7h18v4H0z" fill="#666" />
          </svg>
        </div>
      </div>
      <div className="absolute bottom-0 right-0 flex h-[14px] whitespace-nowrap bg-[#f5f5f5]/70 text-[10px] leading-[14px] text-black">
        <span className="w-[99px] pl-[5px]">Skróty klawiszowe</span>
        <span className="w-[129px]">Dane mapy ©2024 Google</span>
        <span className="w-[48px]">Warunki</span>
        <span className="w-[101px]">Zgłoś błąd w mapach</span>
      </div>
    </div>
  );
}

function Logo() {
  return (
    <svg width="39" height="39" viewBox="0 0 39 39" className="shrink-0">
      <defs>
        <linearGradient id="sky" x1="0" y1="0" x2="0.150" y2="1">
          <stop offset="0" stopColor="#5a3468" />
          <stop offset="0.280" stopColor="#a04a68" />
          <stop offset="0.480" stopColor="#f07c3c" />
          <stop offset="0.720" stopColor="#f8a55a" />
          <stop offset="0.840" stopColor="#e39a6a" />
          <stop offset="1" stopColor="#8d8193" />
        </linearGradient>
        <clipPath id="round"><circle cx="19.500" cy="19.500" r="19.300" /></clipPath>
      </defs>
      <g clipPath="url(#round)">
        <rect width="39" height="39" fill="url(#sky)" />
        <path d="M0 12L8 16L16 22V30H0Z" fill="#f58a42" opacity="0.700" />
        <path d="M3 26L8 22L15 21L24 24L16 27L6 27Z" fill="#27304f" />
        <path d="M5 13C7 9 13 10 18 13L29 21L37 20L38 24L32 29L24 27C15 23 6 19 5 13Z" fill="#2f8f80" />
        <path d="M6 12C9 9 15 11 23 17L20 20C13 17 8 15 6 12Z" fill="#9edbc0" />
        <path d="M5 12L9 13L7 15Z" fill="#20283f" />
        <path d="M25 21L27 17L29 20L38 18L36 22L28 24Z" fill="#3a2448" />
        <path d="M17 21L29 26L23 28Z" fill="#172840" />
        <path d="M7 23h5v4H7zM14 22h5v4h-5z" fill="#3b2348" />
        <path d="M30 23H37L34 27H29Z" fill="#4fb79a" />
        <path d="M14 36Q20 31 27 36L24 39H16Z" fill="#7c8ba0" />
        <path d="M6 31H18M26 32H35" stroke="#f3b98a" strokeWidth="1" />
      </g>
    </svg>
  );
}

function Chevron({ open }) {
  return (
    <span className="flex w-[20px] shrink-0 justify-center">
      <svg width="16" height="16" viewBox="0 0 16 16" fill="none" stroke="#7d7d7d" strokeWidth="2">
        <path d={open ? "M1.500 5L8 11.500L14.500 5" : "M6 1.500L12.500 8L6 14.500"} />
      </svg>
    </span>
  );
}

function Group({ label, open, className }) {
  return (
    <div className={`flex h-6 items-center pl-[22px] text-[15.500px] font-semibold tracking-[-0.020em] ${className}`}>
      <Chevron open={open} />
      <span className="pl-[2px]">{label}</span>
    </div>
  );
}

function Sidebar() {
  return (
    <aside className="h-[919px] w-[220px] shrink-0 bg-[#f1f1f1]">
      <div className="flex h-[72px] items-center pl-[22px]">
        <Logo />
        <span className="pl-[9px] pt-0.5 text-[19px] font-semibold tracking-[-0.018em]">Travel Planner</span>
      </div>
      <div className="mx-4 h-px bg-[#212529]" />
      <Group label="Trips" open className="mt-5" />
      <ul className="mt-[10px] pl-11 text-[13.500px] leading-[29px] tracking-[-0.012em]">
        <li>New trip</li>
        <li>My trips</li>
        <li>Invitations</li>
      </ul>
      <Group label="Friends" className="mt-[10px]" />
      <div className="mx-4 mt-5 h-px bg-[#212529]" />
      <Group label="Account" className="mt-5" />
    </aside>
  );
}

function Field({ value, children }) {
  return (
    <div className="flex h-[38px] w-[331px] items-center justify-between rounded-md border border-[#ced4da] pl-3 pr-4">
      <span>{value}</span>
      {children}
    </div>
  );
}

function Radio({ label, checked }) {
  return (
    <div className="flex h-[26px] items-center gap-2">
      <span className={checked ? "size-4 rounded-full border-[4.500px] border-[#0d6efd] bg-white" : "size-4 rounded-full border border-[#bfbfbf] bg-white"} />
      <span>{label}</span>
    </div>
  );
}

export default function App() {
  return (
    <div className="flex h-[919px] w-[1920px] overflow-hidden bg-white font-['Open_Sans',sans-serif] text-[15px] leading-6 text-[#212529]">
      <Sidebar />
      <main className="flex flex-1 flex-col pl-[312px] pt-9">
        <nav className="flex h-[42px] w-[1076px] items-stretch whitespace-nowrap border-b border-[#dee2e6] text-[#0d6efd]">
          <span className="ml-[208px] w-[91px] pl-[17px] pt-[9px]">Edit Trip</span>
          <span className="w-[173px] pl-[17px] pt-[9px]">Current Participants</span>
          <span className="w-[142px] pl-[17px] pt-[9px]">Add Participant</span>
          <span className="w-[111px] pl-[17px] pt-[9px]">Edit Events</span>
          <span className="-mb-px w-[143px] rounded-t-md border border-b-0 border-[#dee2e6] bg-white pl-4 pt-2 text-[#495057]">Add New Event</span>
        </nav>
        <section className="mt-6 h-[688px] w-[1076px] rounded-md border border-[#dfdfdf] px-4 pt-4">
          <div className="flex justify-between">
            <div className="w-[331px] pt-2">
              <div>Event Name:</div>
              <Field value="Times Square" />
              <div className="mt-2">Event Type:</div>
              <div className="mt-[3px]">
                <Radio label="Single Place" checked />
                <Radio label="Route" />
              </div>
              <div className="mt-[7px]">Location:</div>
              <Field value="times square, ny" />
              <div className="mt-2 flex flex-col items-center">
                <button className="h-[38px] w-[155px] whitespace-nowrap rounded-md bg-[#0d6efd] text-white">Load Map Preview</button>
              </div>
              <div className="mt-2 flex h-6 items-center pl-[56px]">
                <span className="w-[88px] pt-0.5">Zoom Level:</span>
                <input type="range" min="0" max="14" defaultValue="9" className="m-0.5 mb-1 h-4 w-[129px] shrink-0" />
              </div>
              <div className="mt-4">Date:</div>
              <Field value="22.07.2024">
                <svg width="14" height="16" viewBox="0 0 14 16">
                  <path d="M2 0h1.500v2h7V0H12v2h1a1 1 0 0 1 1 1v10.500a1 1 0 0 1-1 1H1a1 1 0 0 1-1-1V3a1 1 0 0 1 1-1h1zM1.500 5.500V13h11V5.500z" fill="#000" />
                </svg>
              </Field>
              <div className="mt-4">Time:</div>
              <Field value="15:25">
                <svg width="14" height="14" viewBox="0 0 14 14" fill="none" stroke="#000" strokeWidth="1.500">
                  <circle cx="7" cy="7" r="6.200" />
                  <path d="M6.800 3.200V7.300L9.600 9.600" strokeWidth="1.100" />
                </svg>
              </Field>
            </div>
            <div className="w-[687px]">
              <h5 className="h-8 pt-[2px] text-center text-[19.500px] font-semibold leading-6 tracking-[-0.010em]">Map Preview</h5>
              <MapPanel />
            </div>
          </div>
          <div className="mt-2 flex justify-center">
            <button className="h-[38px] w-[134px] whitespace-nowrap rounded-md bg-[#0d6efd] text-white">Add New Event</button>
          </div>
        </section>
      </main>
    </div>
  );
}
